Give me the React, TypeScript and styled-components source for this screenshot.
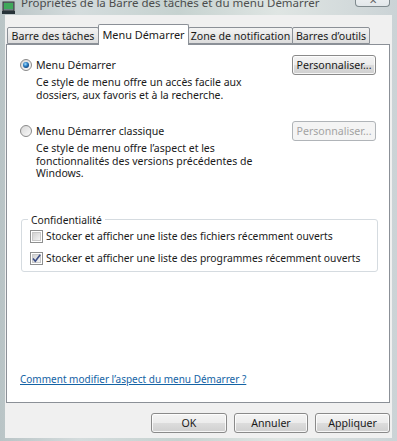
import React from "react";
import styled, { createGlobalStyle } from "styled-components";

const Global = createGlobalStyle`
  html, body { margin: 0; padding: 0; background: #fff; }
  body { font-family: "Noto Sans", "Open Sans", sans-serif; font-size: 10.3px; color: #1a1a1a; }
  * { box-sizing: border-box; }
`;

const Win = styled.div`
  width: 397px;
  height: 441px;
  display: flex;
  flex-direction: column;
  background: linear-gradient(90deg, #b9c4c6 0%, #d4dcdd 20%, #c6d2d0 45%, #dfe5e3 70%, #cbd3d6 100%);
  overflow: hidden;
`;

const TitleBar = styled.div`
  height: 15px;
  flex: none;
  display: flex;
  align-items: flex-end;
  padding: 0 7px 0 2px;
  overflow: hidden;
`;

const TitleIcon = styled.svg`
  flex: none;
  margin-bottom: 1px;
`;

const TitleText = styled.div`
  flex: 1;
  margin-left: 6px;
  font-size: 11.5px;
  line-height: 15px;
  margin-bottom: 5px;
  color: #2a2a2a;
  white-space: nowrap;
  opacity: 0.8;
`;

const CloseBtn = styled.div`
  width: 35px;
  height: 15px;
  margin-bottom: 8px;
  border: 1px solid #7f8a8e;
  border-top: none;
  border-radius: 0 0 4px 4px;
  background: linear-gradient(#f3f5f6, #e2e7ea);
  display: flex;
  align-items: flex-end;
  justify-content: center;
  color: #666;
  font-size: 10px;
  line-height: 10px;
  padding-bottom: 1px;
`;

const Client = styled.div`
  flex: 1;
  margin: 0 5px 3px 5px;
  background: #f0f0f0;
  padding: 9px 2px 0 1px;
  display: flex;
  flex-direction: column;
`;

const TabRow = styled.div`
  display: flex;
  align-items: flex-end;
  height: 20px;
  padding-left: 2px;
  position: relative;
  z-index: 1;
`;

const Tab = styled.div<{ $w: number; $active?: boolean }>`
  width: ${(p) => p.$w}px;
  height: ${(p) => (p.$active ? 21 : 17)}px;
  margin-bottom: ${(p) => (p.$active ? -1 : 0)}px;
  border: 1px solid #8b9097;
  border-bottom: ${(p) => (p.$active ? "none" : "1px solid #8b9097")};
  margin-left: -1px;
  border-radius: 2px 2px 0 0;
  background: ${(p) => (p.$active ? "#fff" : "linear-gradient(#f3f3f3, #e8e8e8 50%, #dcdcdc)")};
  display: flex;
  align-items: center;
  justify-content: center;
  font-size: ${(p) => (p.$active ? "10.9px" : "10.6px")};
  padding-bottom: ${(p) => (p.$active ? 2 : 0)}px;
  white-space: nowrap;
  position: relative;
  z-index: ${(p) => (p.$active ? 2 : 1)};
`;

const Panel = styled.div`
  height: 359px;
  flex: none;
  background: #fff;
  border: 1px solid #8b9097;
  padding: 10px 13px 17px 13px;
  display: flex;
  flex-direction: column;
`;

const Option = styled.div<{ $top: number }>`
  display: flex;
  justify-content: space-between;
  align-items: flex-start;
  margin-top: ${(p) => p.$top}px;
`;

const OptionText = styled.div`
  display: flex;
  flex-direction: column;
`;

const RadioLabel = styled.label`
  height: 19px;
  display: flex;
  align-items: center;
  gap: 4px;
  font-size: 10.6px;
`;

const Desc = styled.div`
  margin: 2px 0 0 16px;
  line-height: 12.5px;
  font-size: 10.5px;
`;

const Button = styled.button<{ $w: number }>`
  width: ${(p) => p.$w}px;
  height: 20px;
  flex: none;
  font-family: inherit;
  font-size: 10.6px;
  color: #1a1a1a;
  border: 1px solid #8a8a8a;
  border-radius: 3px;
  background: linear-gradient(#f4f4f4 0%, #ececec 48%, #dcdcdc 52%, #cfcfcf 100%);
  box-shadow: inset 0 0 0 1px rgba(255, 255, 255, 0.8);
  padding: 0;
  &:disabled {
    color: #a3a3a3;
    border-color: #b0b4b8;
    background: #f4f4f4;
    box-shadow: none;
  }
`;

const Group = styled.fieldset`
  margin: 34px 0 0 1px;
  width: 357px;
  border: 1px solid #d5dbe0;
  border-radius: 3px;
  padding: 4px 8px 6px 8px;
  display: flex;
  flex-direction: column;
  gap: 9px;
`;

const Legend = styled.legend`
  padding: 0 3px;
  margin-left: -2px;
  line-height: 12px;
`;

const CheckRow = styled.label`
  display: flex;
  align-items: center;
  gap: 3px;
  height: 13px;
  white-space: nowrap;
`;

const Link = styled.a`
  margin-top: auto;
  color: #1463a5;
  text-decoration: underline;
  line-height: 12px;
  font-size: 10px;
`;

const ButtonBar = styled.div`
  display: flex;
  justify-content: flex-end;
  gap: 7px;
  padding-top: 10px;
`;

const Radio = ({ checked }: { checked?: boolean }) => (
  <svg width="12" height="12" viewBox="0 0 12 12">
    <defs>
      <linearGradient id={checked ? "rg1" : "rg0"} x1="0" y1="0" x2="1" y2="1">
        <stop offset="0" stopColor="#d6d6d6" />
        <stop offset="1" stopColor="#fbfbfb" />
      </linearGradient>
      <radialGradient id="dot" cx="0.4" cy="0.35" r="0.7">
        <stop offset="0" stopColor="#a6e0ff" />
        <stop offset="0.5" stopColor="#2b7fc4" />
        <stop offset="1" stopColor="#0d3c74" />
      </radialGradient>
    </defs>
    <circle cx="6" cy="6" r="5.5" fill={`url(#${checked ? "rg1" : "rg0"})`} stroke="#8a8a8a" />
    {checked && <circle cx="6" cy="6" r="3" fill="url(#dot)" />}
  </svg>
);

const Check = ({ checked }: { checked?: boolean }) => (
  <svg width="13" height="13" viewBox="0 0 13 13">
    <defs>
      <linearGradient id="cb" x1="0" y1="0" x2="1" y2="1">
        <stop offset="0" stopColor="#cfcfcf" />
        <stop offset="1" stopColor="#f6f6f6" />
      </linearGradient>
    </defs>
    <rect x="0.5" y="0.5" width="12" height="12" fill="#fff" stroke="#8e8f8f" />
    <rect x="2.5" y="2.5" width="8" height="8" fill="url(#cb)" stroke="#c8c8c8" />
    {checked && (
      <path d="M3 6.5 L5.3 9.2 L10.2 2.8" fill="none" stroke="#3b4d86" strokeWidth="1.6" />
    )}
  </svg>
);

export default function App() {
  return (
    <>
      <Global />
      <Win>
        <TitleBar>
          <TitleIcon width="13" height="13" viewBox="0 0 13 13">
            <rect x="1" y="1" width="11" height="9" fill="#6f7f86" stroke="#333" />
            <rect x="2" y="2" width="9" height="6" fill="#3fa85a" />
            <rect x="0" y="10" width="13" height="3" fill="#263238" />
          </TitleIcon>
          <TitleText>Propriétés de la Barre des tâches et du menu Démarrer</TitleText>
          <CloseBtn>✕</CloseBtn>
        </TitleBar>
        <Client>
          <TabRow>
            <Tab $w={92}>Barre des tâches</Tab>
            <Tab $w={91} $active>Menu Démarrer</Tab>
            <Tab $w={105}>Zone de notification</Tab>
            <Tab $w={78}>Barres d’outils</Tab>
          </TabRow>
          <Panel>
            <Option $top={0}>
              <OptionText>
                <RadioLabel>
                  <Radio checked />
                  Menu Démarrer
                </RadioLabel>
                <Desc>
                  Ce style de menu offre un accès facile aux
                  <br />
                  dossiers, aux favoris et à la recherche.
                </Desc>
              </OptionText>
              <Button $w={84}>Personnaliser...</Button>
            </Option>
            <Option $top={20}>
              <OptionText>
                <RadioLabel>
                  <Radio />
                  Menu Démarrer classique
                </RadioLabel>
                <Desc>
                  Ce style de menu offre l’aspect et les
                  <br />
                  fonctionnalités des versions précédentes de
                  <br />
                  Windows.
                </Desc>
              </OptionText>
              <Button $w={84} disabled>
                Personnaliser...
              </Button>
            </Option>
            <Group>
              <Legend>Confidentialité</Legend>
              <CheckRow>
                <Check />
                Stocker et afficher une liste des fichiers récemment ouverts
              </CheckRow>
              <CheckRow>
                <Check checked />
                Stocker et afficher une liste des programmes récemment ouverts
              </CheckRow>
            </Group>
            <Link href="#">Comment modifier l’aspect du menu Démarrer ?</Link>
          </Panel>
          <ButtonBar>
            <Button $w={76}>OK</Button>
            <Button $w={74}>Annuler</Button>
            <Button $w={75}>Appliquer</Button>
          </ButtonBar>
        </Client>
      </Win>
    </>
  );
}
